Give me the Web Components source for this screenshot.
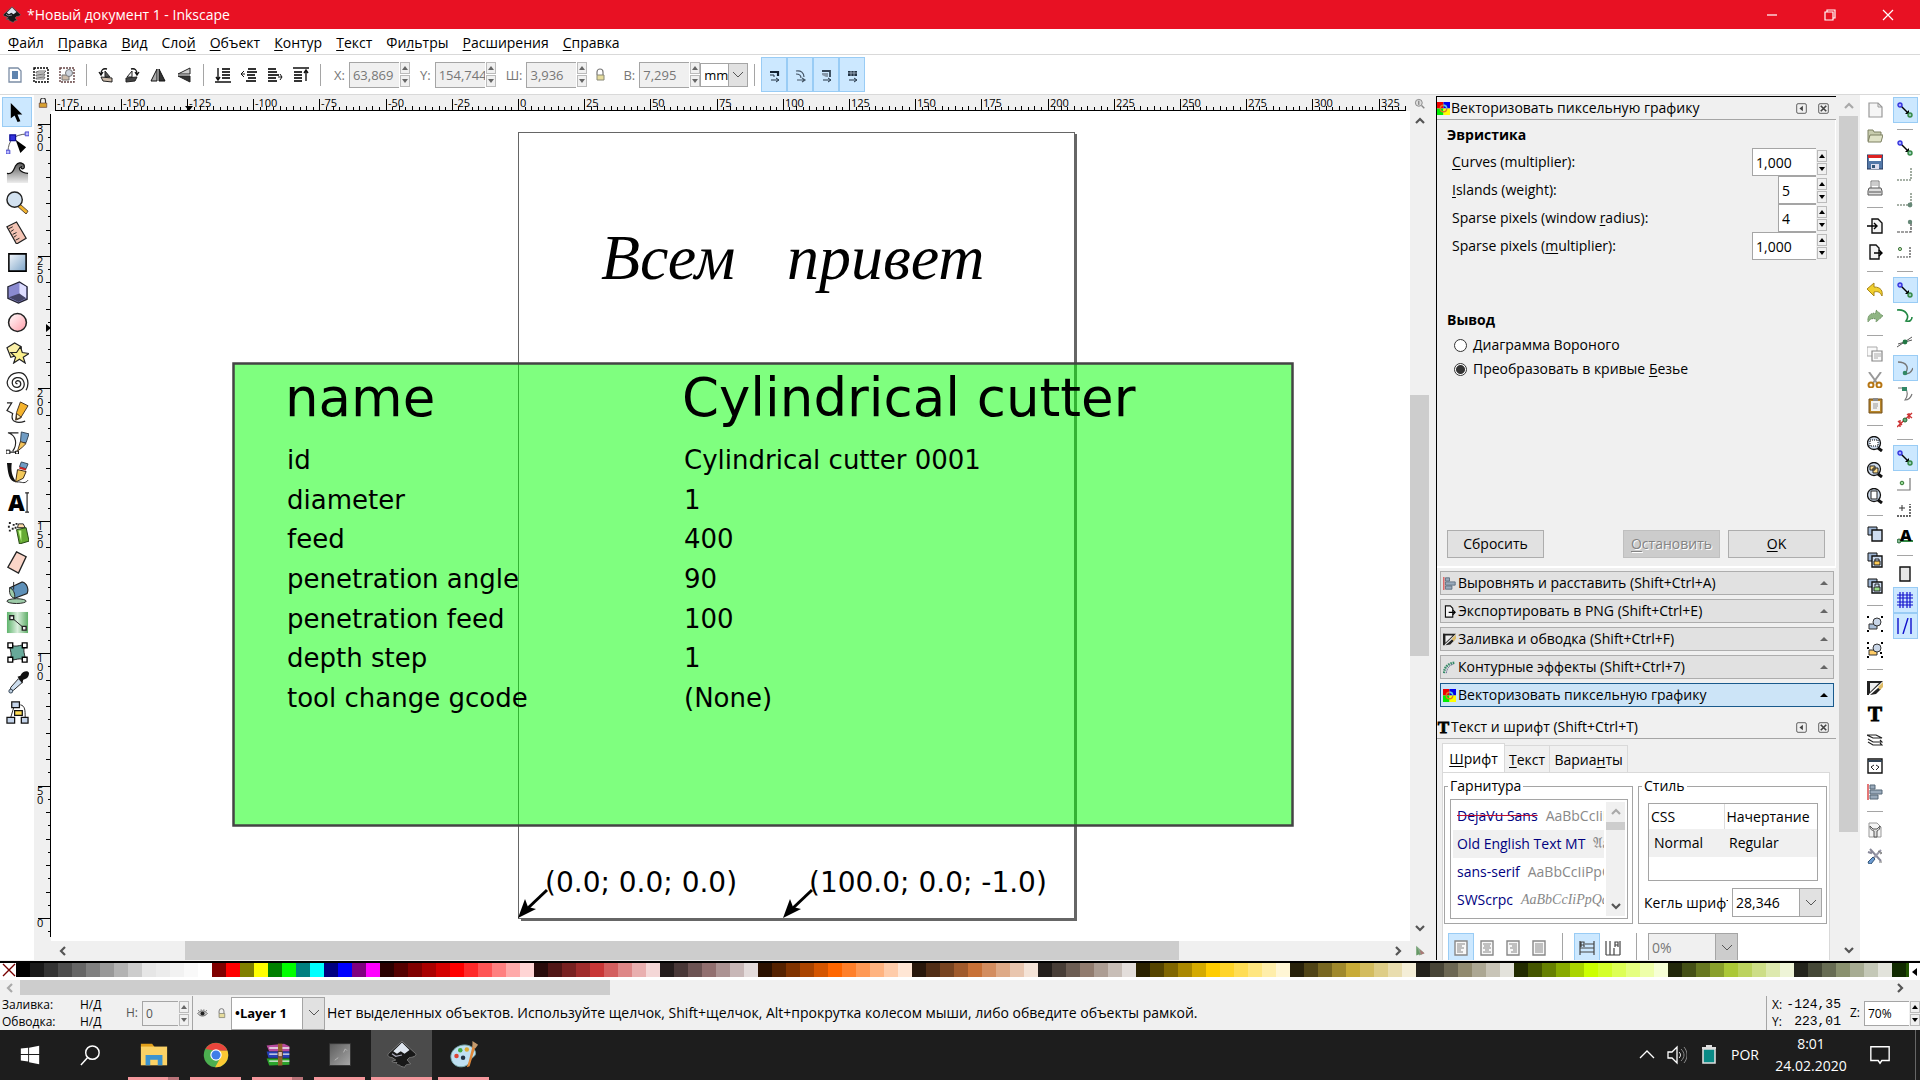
<!DOCTYPE html>
<html lang="ru">
<head>
<meta charset="utf-8">
<title>*Новый документ 1 - Inkscape</title>
<style>
    html, body { height: 100%; }
    body {
        margin: 0;
        overflow: hidden;
        background: #fff;
        color: #000;
        font: 14px/20px "Open Sans", "Noto Sans", sans-serif;
    }
</style>
</head>
<body>
<ink-window></ink-window>

<script>
// ---------- icons ----------
const chain = '<path d="M4 4l8 8" stroke="#000" stroke-width="1.4"/><path d="M12 8v4H8z"/><circle cx="3" cy="3" r="2" fill="#aaf" stroke="#33d" stroke-width="1.4"/><circle cx="13" cy="13" r="2" fill="#9cb" stroke="#384" stroke-width="1.4"/>';
const lens = '<circle cx="7" cy="7" r="6.5" fill="#cfdcec" stroke="#111" stroke-width="1.3"/><path d="M11 12l4 3" stroke="#111" stroke-width="3"/>';
const sheets = '<path d="M1 1h9v8H1z" fill="#9db4d2" stroke="#111"/><path d="M5 4h10v11H5z" fill="#cddcf0" stroke="#111" stroke-width="1.4"/>';
const pageOut = '<path d="M3 1h6l3 3v11H3z" fill="#f4f4f4" stroke="#111" stroke-width="1.4"/>';
const logo = '<path d="M12 1L23 11c1 2-3 3-5 3l-2 2c2 1 1 2 3 3-3 1-4 0-5 3-1-1-3 0-4-2-2 0-3-1-2-2-2 0-4 0-4-1l3-1-3-2c-2 0-4-1-3-3z" fill="#181818" stroke="#777" stroke-width=".8"/><path d="M12 2l6 6-4 3-3-2-3 2-3-2z" fill="#dfe6f0"/><path d="M4 11l3 2 5-1" stroke="#aab" fill="none"/>';
const raster = '<path d="M0 0h8v8H0z" fill="#e00"/><path d="M8 0h8v8H8z" fill="#00e"/><path d="M0 8h8v8H0z" fill="#0e0"/><path d="M8 8h8v8H8z" fill="#ff0"/><circle cx="8" cy="8" r="4" fill="none" stroke="#d72" stroke-width="1.6"/><path d="M8 4a4 4 0 0 1 4 4" fill="none" stroke="#4cf" stroke-width="1.6"/>';
const pageLines = l => `<path d="M2 1h12v14H2z" fill="#f8f8f8" stroke="#888" stroke-width="1.4"/><path d="${l}" stroke="#888"/>`;
const brush = '<path d="M0 1h16L1 15z" fill="#222"/><path d="M0 1h2v14H0z" fill="#222"/><path d="M3 3h9L3 12z" fill="#eee"/><path d="M3 15l8-7 3 1-5 5z" fill="#222"/><path d="M11 7l5-5v5l-3 3z" fill="#db6"/>';
const bars = '<path d="M1 0v16" stroke="#d55" stroke-width="1.6"/><path d="M3 1h5v4H3zM3 6h12v4H3zM3 11h8v4H3z" fill="#9ab" stroke="#567"/>';

const ICONS = {
    logo: [24, logo],
    // select toolbar
    doc: [16, '<path d="M2 1h9l3 3v11H2z" fill="#fff" stroke="#7b8da5" stroke-width="1.3"/><path d="M5 5h6M5 7h6M5 9h6M5 11h6" stroke="#2c5c94" stroke-width="1.3"/>'],
    selAll: [16, '<path d="M1 1h14v14H1z" fill="none" stroke="#000" stroke-width="1.4" stroke-dasharray="2 1"/><path d="M3 5l3-1h7l-2 2H3zM3 8l9-1-1 2H3zM3 11l9-1-1 2H3z" fill="#eee" stroke="#555" stroke-width=".8"/>'],
    selTouch: [16, '<path d="M1 1h14v14H1z" fill="none" stroke="#644" stroke-width="1.4" stroke-dasharray="2 1"/><path d="M3 8h7v5H3z" fill="#cba" stroke="#777"/><circle cx="10" cy="6" r="3.5" fill="#cdd4dd" stroke="#777"/>'],
    rotL: [16, '<path d="M7 10V4l5 6z" fill="#555" stroke="#222"/><path d="M3 10l11 1v4L5 14z" fill="#cba" stroke="#222"/><path d="M9 2C5 1 3 3 3 7M1 5l2 3 2-3" fill="none" stroke="#111" stroke-width="1.3"/>'],
    rotR: [16, '<path d="M8 10V4l-5 6z" fill="#eee" stroke="#222"/><path d="M13 10L2 11v4l9-1z" fill="#444" stroke="#222"/><path d="M7 2c4-1 6 1 6 5M11 5l2 3 2-3" fill="none" stroke="#111" stroke-width="1.3"/>'],
    flipH: [16, '<path d="M7 2v12H1z" fill="#aaa" stroke="#111"/><path d="M9 2v12h6z" fill="#333" stroke="#111"/>'],
    flipV: [16, '<path d="M14 1v6H2z" fill="#ccc" stroke="#222"/><path d="M14 15V9H2z" fill="#333" stroke="#222"/>'],
    toBottom: [16, '<path d="M3 1v11M1 10l2 3 2-3M0 15h16" fill="none" stroke="#111" stroke-width="1.4"/><path d="M7 2h8M7 5h8M7 8h8M7 11h8" stroke="#333" stroke-width="2"/>'],
    lower: [16, '<path d="M4 7H1M3 4L0 7l3 3" fill="none" stroke="#111"/><path d="M7 2h8M6 5h10M6 8h8M7 11h8M5 14h10" stroke="#333" stroke-width="2"/>'],
    raise: [16, '<path d="M11 10h4M13 7l2 3-2 3" fill="none" stroke="#111"/><path d="M1 2h8M1 5h9M1 8h11M1 11h8M1 14h9" stroke="#333" stroke-width="2"/>'],
    toTop: [16, '<path d="M13 14V4M11 6l2-3 2 3M0 1h16" fill="none" stroke="#111" stroke-width="1.4"/><path d="M1 5h8M1 8h8M1 11h8M1 14h8" stroke="#333" stroke-width="2"/>'],
    lock: [16, '<path d="M5 8V5a3 3 0 0 1 6 0v3" fill="none" stroke="#777" stroke-width="1.2"/><path d="M5 8h7v5H5z" fill="#e6dc9c" stroke="#887"/>'],
    lockGold: [16, '<path d="M4 8V4a4 4 0 0 1 8 0v4" fill="none" stroke="#333" stroke-width="1.8"/><path d="M2 8h12v7H2z" fill="#d8a030" stroke="#533"/>'],
    affStroke: [16, '<path d="M4 5h8v4" fill="none" stroke="#123" stroke-width="2.2"/><path d="M4 8h4v2M5 13h7M10 11l3 2-3 2" fill="none" stroke="#234"/>'],
    affCorner: [16, '<path d="M4 4c5-1 8 2 8 6M4 7c3 0 5 1 5 4M5 13h7M10 11l3 2-3 2" fill="none" stroke="#456" stroke-width="1.2"/>'],
    affGrad: [16, '<path d="M4 4h8v6" fill="none" stroke="#345" stroke-width="1.8"/><path d="M4 6h6v4H8L4 8z" fill="#89a"/><path d="M5 13h7M10 11l3 2-3 2" fill="none" stroke="#234"/>'],
    affPat: [16, '<path d="M4 4h9v5H4z" fill="#234"/><path d="M7 4v5M10 4v5M4 6h9" stroke="#bcd" stroke-width=".7"/><path d="M5 13h7M10 11l3 2-3 2" fill="none" stroke="#234"/>'],
    // toolbox
    pointer: [24, '<path d="M5 2v16l4-3 3 7 3-1-3-7h5z" fill="#000"/>'],
    node: [24, '<path d="M2 21C3 10 7 4 22 3" fill="none" stroke="#555"/><path d="M4 4h6v6H4z" fill="#33d" stroke="#119" stroke-width="1.3"/><path d="M20 1h4v4h-4zM0 20h4v4H0z" fill="#bbf" stroke="#44c"/><path d="M10 9l11 8-6 6z"/>'],
    tweak: [24, '<defs><linearGradient id="a" x2="0" y2="1"><stop offset="0" stop-color="#555"/><stop offset="1" stop-color="#eee"/></linearGradient></defs><path d="M1 23V13c6 1 7-4 9-8 3-6 10-3 9 2-1 2-4 1-3-1-3 1-2 6 7 7v10z" fill="url(#a)"/><path d="M1 13c6 1 7-4 9-8 3-5 10-3 9 2-1 2-4 1-3-1-4 1-2 6 7 7" fill="none" stroke="#111" stroke-width="1.3"/>'],
    zoom: [24, '<path d="M15 14l8 7-2 3-9-8z" fill="#f2b32c" stroke="#543"/><circle cx="9" cy="9" r="8" fill="#d3e2f0" stroke="#222" stroke-width="1.5"/>'],
    measure: [24, '<path d="M1 6l10-5 10 17-10 6z" fill="#f4c4b4" stroke="#222" stroke-width="1.3"/><path d="M3 8l4-2M5 11l3-2M7 14l4-2M8 17l3-2M10 20l4-2" stroke="#222"/>'],
    rect: [24, '<defs><linearGradient id="b" x2="1" y2="1"><stop offset="0" stop-color="#f4f8fc"/><stop offset="1" stop-color="#7ba3c7"/></linearGradient></defs><path d="M3 3h18v18H3z" fill="url(#b)" stroke="#000" stroke-width="1.6"/>'],
    box: [24, '<path d="M2 6L14 1l8 5v13l-9 4L2 18z" fill="#8a8ad0" stroke="#223" stroke-width="1.4"/><path d="M14 2l7 4v12l-7-4z" fill="#ddf"/><path d="M3 17l11-4 7 5-8 4z" fill="#446"/>'],
    ellipse: [24, '<defs><linearGradient id="c" x2="1" y2="1"><stop offset="0" stop-color="#fff"/><stop offset="1" stop-color="#ff9ca8"/></linearGradient></defs><circle cx="12" cy="12" r="9.3" fill="url(#c)" stroke="#222" stroke-width="1.6"/>'],
    star: [24, '<path d="M1 7l8-5 7 4-1 8-10 3z" fill="#fbf0a8" stroke="#222" stroke-width="1.2"/><path d="M15 6l2 6 7 1-6 4 2 6-6-4-6 4 2-6-5-5 6 0z" fill="#fbf08c" stroke="#222" stroke-width="1.2"/>'],
    spiral: [24, '<path d="M12 13c-2 1-3-2 0-3 4 0 5 6 0 7-6 1-8-8-1-10 8-1 11 9 4 13-8 4-16-4-13-11C5 1 17-1 21 6c3 5 2 10 0 14" fill="none" stroke="#222" stroke-width="1.3"/>'],
    pencil: [24, '<path d="M1 2h5L1 10l6 3c-3 9 5 11 13 8" fill="none" stroke="#222" stroke-width="1.2"/><path d="M15 1l8 4-8 13-5 2 1-8z" fill="#f5b32c" stroke="#432"/><path d="M11 13l5 4-5 2z" fill="#fff4c8" stroke="#432"/>'],
    pen: [24, '<path d="M2 2h11M3 2c8 3 9 12 4 19M4 22h8" fill="none" stroke="#222" stroke-width="1.2"/><path d="M0 20h4v4H0zM10 21h3v3h-3z" fill="#fff" stroke="#000"/><path d="M16 1l8 2-3 9h-6z" fill="#6f9cc4" stroke="#345"/><path d="M15 11l6 2-4 4-5 4z" fill="#f2c35a" stroke="#432"/>'],
    calli: [24, '<path d="M1 2h5c-1 8 0 14 5 20C3 22 2 12 1 2z" fill="#111"/><path d="M16 1l7 2-2 5-7-2z" fill="#6f9cc4" stroke="#345"/><path d="M14 7l7 2" stroke="#c22" stroke-width="2"/><path d="M12 9l9 2-3 7-8 4z" fill="#f2c85a" stroke="#321"/><path d="M11 22c5-1 8 3 12-2" fill="none" stroke="#222"/>'],
    text: [24, '<path d="M22 2v20M20 2h4M20 22h4" stroke="#222" stroke-width="1.2"/><text x="2" y="21" font-family="Open Sans, sans-serif" font-size="24" font-weight="800">A</text>'],
    spray: [24, '<path d="M3 2h2M7 4h2M2 6h2M6 8h2M10 3h2M3 10h2M9 7h2" stroke="#222" stroke-width="2"/><path d="M12 7l1-4h5l2 4z" fill="#fda" stroke="#222"/><path d="M11 9l10-2 3 14-10 3z" fill="#6a3" stroke="#241"/><path d="M13 10h3v12z" fill="#cf9"/>'],
    eraser: [24, '<path d="M11 1l10 5-8 17-11-6z" fill="#fbd5c8" stroke="#222" stroke-width="1.4"/>'],
    bucket: [24, '<ellipse cx="11" cy="21" rx="10" ry="2.5" fill="#9dcba8" stroke="#222"/><path d="M4 7L17 1c5 1 7 8 5 12L9 18z" fill="#5e90b8" stroke="#222" stroke-width="1.2"/><path d="M4 7c3 1 6 6 5 11-5-1-6-7-5-11z" fill="#9dcba8" stroke="#222"/><path d="M8 1v8" stroke="#222"/>'],
    gradient: [24, '<defs><linearGradient id="d" x2="1"><stop offset="0" stop-color="#5fb46c"/><stop offset=".5" stop-color="#d9eedc"/><stop offset="1" stop-color="#5fae68"/></linearGradient></defs><path d="M1 1h22v22H1z" fill="url(#d)"/><path d="M6 7l13 11" stroke="#222"/><path d="M4 5h4v4H4zM17 16h4v4h-4z" fill="#eee" stroke="#222" stroke-width="1.4"/>'],
    mesh: [24, '<path d="M4 4c7 3 10 0 16 0-3 7 0 9 0 16-7-3-9 0-16 0 3-7 0-9 0-16z" fill="#67a99a" stroke="#222"/><path d="M2 2h5v5H2zM17 2h5v5h-5zM2 17h5v5H2zM17 17h5v5h-5z" fill="#fff" stroke="#000" stroke-width="1.4"/>'],
    dropper: [24, '<path d="M13 8l4 4-9 8-4 2 1-5z" fill="#cde" stroke="#222"/><path d="M12 6l3-1c2-5 8-6 9-3 0 4-2 6-6 7l-1 4z" fill="#111"/><circle cx="5" cy="21" r="2" fill="#bcd" stroke="#345"/>'],
    connector: [24, '<path d="M5 17L8 7M15 4c5 1 5 6 5 13" fill="none" stroke="#222"/><path d="M6 1h8v6H6zM1 17h8v6H1zM16 17h7v6h-7z" fill="#c4d4ea" stroke="#111" stroke-width="1.3"/><path d="M9 10h8v5H9z" fill="#fd5" stroke="#111" stroke-width="1.3"/>'],
    // commands
    new: [16, '<path d="M2 1h9l4 4v10H2z" fill="#f6f6f6" stroke="#999" stroke-width="1.2"/><path d="M11 1v4h4" fill="none" stroke="#999"/>'],
    open: [16, '<path d="M1 13V2h5l1 2h7v3" fill="#c8ccae" stroke="#7d8062"/><path d="M3 7h13l-2 7H1z" fill="#dfe2c6" stroke="#7d8062"/>'],
    save: [16, '<path d="M0 1h16v14H0z" fill="#5378a8" stroke="#235"/><path d="M2 1h12v6H2z" fill="#fff"/><path d="M1 1h14v3H1z" fill="#d22"/><path d="M4 10h8v5H4z" fill="#dde"/><path d="M5 11h3v3H5z" fill="#357"/>'],
    print: [16, '<path d="M4 1h8v8H4z" fill="#fff" stroke="#777"/><path d="M5 3h6M5 5h6" stroke="#999"/><path d="M2 8h12l1 3v4H1v-4z" fill="#ddd" stroke="#555"/><path d="M2 12h12" stroke="#555"/>'],
    import: [16, '<path d="M5 1h6l4 4v10H5z" fill="#f4f4f4" stroke="#111" stroke-width="1.4"/><path d="M0 8h9M7 5l3 3-3 3" fill="none" stroke="#000" stroke-width="1.4"/>'],
    export: [16, pageOut + '<path d="M7 9h8M12 6l3 3-3 3" fill="none" stroke="#000" stroke-width="1.4"/>'],
    undo: [16, '<path d="M0 7l7-6v4c7 0 9 4 8 9-2-4-4-5-8-4v4z" fill="#f0cf2e" stroke="#a8861a"/>'],
    redo: [16, '<path d="M16 8L9 2v3C3 5 0 8 1 14c2-3 4-4 8-3v3z" fill="#8fb583" stroke="#5b8052" stroke-dasharray="1 1"/>'],
    copy: [16, '<path d="M0 1h10v9H0z" fill="#fafafa" stroke="#aaa"/><path d="M5 5h10v10H5z" fill="#fafafa" stroke="#888" stroke-width="1.2"/><path d="M7 8h7M7 10h7M7 12h4" stroke="#aaa"/>'],
    cut: [16, '<path d="M2 0l8 11M14 0L6 11" stroke="#999" stroke-width="2"/><circle cx="4" cy="13" r="2.5" fill="none" stroke="#b67614" stroke-width="2"/><circle cx="12" cy="13" r="2.5" fill="none" stroke="#b67614" stroke-width="2"/>'],
    paste: [16, '<path d="M2 1h13v14H2z" fill="#b8862a" stroke="#74501a"/><path d="M4 3h9v10H4z" fill="#f4f4f0"/><path d="M6 0h5v3H6z" fill="#888"/><path d="M6 6h5M6 8h5M6 10h4" stroke="#999"/>'],
    zoomSel: [16, lens + '<path d="M3 4h8v6H3z" fill="#fff" stroke="#000" stroke-dasharray="1 1"/>'],
    zoomDraw: [16, lens + '<path d="M3 4h5v4H3zM6 6h5v5H6z" fill="#fd8" stroke="#222"/>'],
    zoomPage: [16, lens + '<path d="M4 3h6v8H4z" fill="#fff" stroke="#222"/>'],
    dup: [16, sheets],
    clone: [16, sheets + '<path d="M7 9h6v4H7z" fill="#fc5" stroke="#222"/><path d="M8 9V7h4v2" fill="none" stroke="#222"/>'],
    unlink: [16, sheets + '<path d="M7 9h6v4H7z" fill="#9d8" stroke="#222"/><path d="M8 8V6h4v3" fill="none" stroke="#222"/>'],
    group: [16, '<path d="M0 1h2M14 1h2M0 15h2M14 15h2" stroke="#000" stroke-width="2"/><path d="M2 8h8v5H2z" fill="#a9bdd6" stroke="#333"/><circle cx="10" cy="6" r="4" fill="#c9d6e8" stroke="#333"/>'],
    ungroup: [16, '<path d="M0 1h2M14 1h2M0 15h2M14 15h2M0 6h2M13 11h2" stroke="#000" stroke-width="2"/><path d="M2 8h8v5H2z" fill="#fc6" stroke="#333"/><circle cx="10" cy="6" r="4" fill="#c9d6e8" stroke="#333"/>'],
    fill: [16, brush],
    bigT: [16, '<text x="8" y="15" text-anchor="middle" font-family="Liberation Serif, serif" font-size="21" font-weight="700" stroke="#000">T</text>'],
    layers: [16, '<path d="M0 3h9l6 3H6zM1 7l5 3h9l-2-2M1 10l5 3h9l-2-2" fill="#fff" stroke="#222" stroke-width="1.2"/>'],
    xml: [16, '<path d="M1 1h14v14H1z" fill="#fff" stroke="#111" stroke-width="1.4"/><path d="M1 3h14" stroke="#345" stroke-width="2"/><path d="M7 7L4 9l3 3M9 7l3 2-3 3" fill="none" stroke="#222"/>'],
    align: [16, bars],
    docProps: [16, '<path d="M2 1h8l4 4v10H2z" fill="#f4f4f4" stroke="#999"/><path d="M3 4c0 4 2 4 4 5v6h3V9c2-1 3-2 3-5l-3 3H6z" fill="#ddd" stroke="#555"/>'],
    prefs: [16, '<path d="M3 1l11 12M1 4l3 1 1-3" fill="none" stroke="#889" stroke-width="2"/><path d="M14 2L3 14" stroke="#99a" stroke-width="2"/><path d="M6 9l-5 5 1 2h2l4-5z" fill="#6c9bd2" stroke="#357"/><path d="M11 3l4 2-2 1M15 14h-3" stroke="#777" fill="none"/>'],
    // snapping
    snap: [16, chain],
    snapBox: [16, '<path d="M0 14h14V1" fill="none" stroke="#8a988a" stroke-width="1.6" stroke-dasharray="2 1"/>'],
    snapCorner: [16, '<path d="M0 13h14V1" fill="none" stroke="#8a988a" stroke-width="1.6" stroke-dasharray="2 1"/><circle cx="13" cy="13" r="2.4" fill="#687"/>'],
    snapMid: [16, '<path d="M0 14h14V3" fill="none" stroke="#444" stroke-width="1.2" stroke-dasharray="3 1"/><circle cx="13" cy="4" r="2.2" fill="#687"/>'],
    snapCenter: [16, '<path d="M0 13h13V2" fill="none" stroke="#444" stroke-width="1.2" stroke-dasharray="2 1"/><circle cx="3" cy="5" r="1.6" fill="#bda" stroke="#474"/>'],
    snapPath: [16, '<path d="M0 2c9-1 13 6 9 11 4 1 6-1 6-4" fill="none" stroke="#284" stroke-width="1.6"/>'],
    snapX: [16, '<path d="M0 13L15 3M1 10l14-4" stroke="#555"/><circle cx="8" cy="8" r="2.4" fill="#274"/>'],
    snapCusp: [16, '<path d="M1 2c8 0 12 5 7 12 5 0 7-3 8-6" fill="none" stroke="#777" stroke-width="1.4"/><circle cx="8" cy="13" r="2.3" fill="#386"/>'],
    snapSmooth: [16, '<path d="M1 2h7c3 3 3 8 0 12 4 0 6-3 7-6" fill="none" stroke="#777" stroke-width="1.2"/><path d="M5 1h5v4H5z" fill="#386"/>'],
    snapLine: [16, '<path d="M0 15L15 1M1 9l4 4M3 8v7M10 2l5 4M12 1v6" stroke="#c33" stroke-width="1.4"/><circle cx="8" cy="8" r="2" fill="#6a7" stroke="#263"/>'],
    snapObj: [16, '<path d="M0 14h13V2" fill="none" stroke="#777" stroke-width="1.2"/><circle cx="5" cy="7" r="1.8" fill="#9d9" stroke="#373"/>'],
    snapRot: [16, '<path d="M0 14h13V2" fill="none" stroke="#333" stroke-width="1.4" stroke-dasharray="2 1"/><path d="M5 3v6M2 6h6" stroke="#333"/>'],
    snapText: [16, '<path d="M3 13h13" stroke="#384" stroke-width="2"/><circle cx="2" cy="13" r="2" fill="#8b9" stroke="#263"/><text x="3" y="13" font-family="Open Sans, sans-serif" font-size="16" font-weight="800">A</text>'],
    snapPage: [16, '<path d="M3 1h10v14H3z" fill="#e8e8e8" stroke="#111" stroke-width="1.4"/>'],
    snapGrid: [16, '<path d="M3 0v16M6 0v16M10 0v16M13 0v16M0 3h16M0 6h16M0 10h16M0 13h16" stroke="#11c" stroke-width="1.2"/>'],
    snapGuide: [16, '<path d="M1 0v16M6 16l5-16M14 0v16" stroke="#11c" stroke-width="1.4"/>'],
    // docks
    raster: [16, raster],
    effects: [16, '<path d="M1 15C2 7 6 3 15 2" fill="none" stroke="#386" stroke-width="3" stroke-dasharray="2 1"/><path d="M4 15C5 9 8 5 13 4" fill="none" stroke="#558" stroke-dasharray="2 1"/>'],
    iconify: [16, '<rect x="1" y="1" width="14" height="14" rx="2" fill="none" stroke="#444" stroke-width="1.2"/><path d="M10 4v8L5 8z" fill="#444"/>'],
    close: [16, '<rect x="1" y="1" width="14" height="14" rx="2" fill="none" stroke="#444" stroke-width="1.2"/><path d="M4 4l8 8M12 4l-8 8" stroke="#444" stroke-width="2.4"/>'],
    left: [16, pageLines('M4 4h8M4 6h5M4 8h7M4 10h4M4 12h6')],
    center: [16, pageLines('M4 4h8M5 6h6M4 8h8M6 10h4M4 12h8')],
    right: [16, pageLines('M4 4h8M7 6h5M5 8h7M8 10h4M6 12h6')],
    justify: [16, pageLines('M4 4h8M4 6h8M4 8h8M4 10h8M4 12h8')],
    horiz: [16, '<path d="M1 1v14M15 1v14M6 4h9M1 8h14M1 12h14M2 7V2h3v5M2 5h3" fill="none" stroke="#444" stroke-width="1.2"/>'],
    vert: [16, '<path d="M1 1v14M5 1v14M9 8v7M1 15h14M15 1v14M10 7V2h3v5M10 5h3" fill="none" stroke="#444" stroke-width="1.2"/>'],
    eye: [16, '<path d="M1 8c4-5 10-5 14 0-4 5-10 5-14 0z" fill="#ccc" stroke="#444"/><circle cx="8" cy="8" r="3" fill="#222"/><path d="M3 5L2 3M6 4V2M10 4V2M13 5l1-2" stroke="#444"/>'],
    magnify: [16, '<circle cx="7" cy="7" r="5" fill="#ddd" stroke="#888" stroke-width="1.4"/><path d="M11 11l4 4" stroke="#888" stroke-width="2"/><path d="M7 4v6" stroke="#666" stroke-width="1.4"/>'],
    cms: [16, '<path d="M3 1l11 10-7 3z" fill="#8a8"/><path d="M3 1v13l5-2z" fill="#696"/><path d="M8 6l6 5-5 2z" fill="#a77"/>'],
    // taskbar
    win: [24, '<path d="M2 5l8-1v7H2zM11 4l11-2v9H11zM2 12h8v7l-8-1zM11 12h11v10l-11-2z" fill="#fff"/>'],
    search: [24, '<circle cx="14" cy="9" r="7" fill="none" stroke="#fff" stroke-width="1.5"/><path d="M9 14l-7 8" stroke="#fff" stroke-width="1.5"/>'],
    folder: [32, '<path d="M2 4h12l3 4H2z" fill="#e2a01a"/><path d="M2 7h28v20H2z" fill="#fbd265"/><path d="M7 27V16h18v11h-5v-6h-8v6z" fill="#3b93d0"/>'],
    chrome: [32, '<circle cx="16" cy="16" r="14" fill="#4caf50"/><path d="M4 9a14 14 0 0 1 25 2H16z" fill="#e8453c"/><path d="M29 11a14 14 0 0 1-14 19l6-11-2-8z" fill="#fcc934"/><circle cx="16" cy="16" r="6.5" fill="#fff"/><circle cx="16" cy="16" r="5.2" fill="#3f7de8"/>'],
    rar: [32, '<path d="M3 5l20-2 6 3v6H6z" fill="#b64a9c"/><path d="M3 12h26v7H5z" fill="#2540b8"/><path d="M3 20h26v7l-23 1z" fill="#2ba32b"/><path d="M6 8h23M6 15h23M6 23h23" stroke="#eee" stroke-width="1.5"/><path d="M16 3h5v25h-5z" fill="#94602a"/><path d="M16 12h5v6h-5z" fill="#dba" stroke="#532"/>'],
    gray: [32, '<defs><linearGradient id="e" x2="1" y2="1"><stop offset="0" stop-color="#5c5c5c"/><stop offset="1" stop-color="#a8a8a8"/></linearGradient></defs><path d="M4 3h24v25H4z" fill="url(#e)" stroke="#333"/><path d="M20 13l2-4 2 2M10 22l4-3" fill="none" stroke="#bbb"/>'],
    paint: [32, '<path d="M2 17C3 7 18 1 26 9c6 7-1 9-3 12-1 6-8 9-14 7-5-2-7-6-7-11z" fill="#bfe0f2" stroke="#7aa"/><circle cx="8" cy="17" r="2.4" fill="#d43"/><circle cx="12" cy="11" r="2.4" fill="#4a4"/><circle cx="19" cy="10" r="2.4" fill="#da3"/><circle cx="15" cy="19" r="2.4" fill="#234"/><path d="M29 4l-7 24-3 1 2-6 5-20z" fill="#e0883a"/><path d="M25 1l6 4-3 4-3-2z" fill="#c49a6c"/>'],
    tray: [16, '<path d="M1 11l7-7 7 7" fill="none" stroke="#fff" stroke-width="1.3"/>'],
    sound: [20, '<path d="M1 7h4l5-5v16l-5-5H1z" fill="none" stroke="#fff" stroke-width="1.3"/><path d="M12 7c2 2 2 4 0 6" fill="none" stroke="#fff"/><path d="M14 4c4 4 4 8 0 12M17 2c4 5 4 11 0 16" fill="none" stroke="#888"/>'],
    bin: [20, '<path d="M4 4h12v14H4z" fill="#0a8a86" stroke="#ddd" stroke-width="1.6"/><path d="M3 3h14M7 1h6" stroke="#ddd" stroke-width="2"/>'],
    note: [24, '<path d="M2 3h20v15h-8l-2 3-2-3H2z" fill="none" stroke="#fff" stroke-width="1.5"/>'],
    min: [16, '<path d="M3 8h10" stroke="#fff" stroke-width="1.2"/>'],
    restore: [16, '<path d="M3 5h8v8H3zM5 5V3h8v8h-2" fill="none" stroke="#fff" stroke-width="1.2"/>'],
    exit: [16, '<path d="M3 3l10 10M13 3L3 13" stroke="#fff" stroke-width="1.2"/>'],
    up: [16, '<path d="M4 10l4-4 4 4" fill="none" stroke="#555" stroke-width="2.2"/>'],
    down: [16, '<path d="M4 6l4 4 4-4" fill="none" stroke="#555" stroke-width="2.2"/>'],
    prev: [16, '<path d="M10 4L6 8l4 4" fill="none" stroke="#555" stroke-width="2.2"/>'],
    next: [16, '<path d="M6 4l4 4-4 4" fill="none" stroke="#555" stroke-width="2.2"/>'],
};

const icon = (name, size = 16) => `<ink-icon name="${name}" size="${size}"></ink-icon>`;
// "_Файл" -> underlined access key
const mnemonic = s => s.replace(/_(.)/, '<u>$1</u>');

const BASE = `
    *, *::before { box-sizing: border-box; }
    button, input, select { font: inherit; color: inherit; margin: 0; padding: 0; border: 0; border-radius: 0; background: none; min-width: 0; }
    u { text-underline-offset: 2px; }
`;

class InkElement extends HTMLElement {
    constructor() {
        super();
        this.attachShadow({ mode: 'open' });
    }
    connectedCallback() {
        this.shadowRoot.innerHTML = `<style>${BASE}${this.styles()}</style>${this.markup()}`;
    }
    styles() { return ''; }
    markup() { return ''; }
}

class InkIcon extends InkElement {
    styles() { return ':host { display: block; flex: none; } svg { display: block; }'; }
    markup() {
        const [box, body] = ICONS[this.getAttribute('name')];
        const size = this.getAttribute('size');
        return `<svg width="${size}" height="${size}" viewBox="0 0 ${box} ${box}" aria-hidden="true">${body}</svg>`;
    }
}
customElements.define('ink-icon', InkIcon);

// number entry with two stacked arrows
class InkSpin extends InkElement {
    styles() {
        return `
            :host { display: flex; align-items: center; gap: 4px; }
            label { flex: 1; white-space: nowrap; }
            input { width: var(--field, 50px); height: var(--h, 26px); padding: 0 0 0 3px; border: 1px solid #a5a5a5; border-right: 0; background: #fff; }
            .box { display: flex; gap: 1px; }
            .arrows { display: flex; flex-direction: column; gap: 1px; justify-content: center; }
            button { display: block; width: 10px; height: 12px; border: 1px solid #bbb; background: #f0f0f0; }
            svg { display: block; width: 8px; height: 10px; }
            :host([off]) { color: #777; fill: #666; }
            :host([off]) input { background: #f0f0f0; }
        `;
    }
    markup() {
        const off = this.hasAttribute('off') ? 'disabled' : '';
        return `
            <label for="f">${mnemonic(this.getAttribute('label'))}</label>
            <span class="box">
                <input id="f" value="${this.getAttribute('value')}" ${off}>
                <span class="arrows">
                    <button aria-label="+" ${off}><svg viewBox="0 0 8 10"><path d="M1 7l3-4 3 4z"/></svg></button>
                    <button aria-label="-" ${off}><svg viewBox="0 0 8 10"><path d="M1 3l3 4 3-4z"/></svg></button>
                </span>
            </span>`;
    }
}
customElements.define('ink-spin', InkSpin);

class InkCombo extends InkElement {
    styles() {
        return `
            :host { display: flex; align-items: center; gap: 4px; }
            label { width: var(--label, auto); overflow: hidden; white-space: nowrap; }
            .box { display: grid; width: var(--field, 90px); height: var(--h, 29px); border: 1px solid #a5a5a5; background: #fff; }
            select, .arrow { grid-area: 1 / 1; }
            select { appearance: none; padding: 0 0 0 3px; outline: 0; opacity: 1; }
            .arrow { justify-self: end; display: grid; place-items: center; width: var(--arrow, 22px); border-left: 1px solid #a5a5a5; background: #e1e1e1; pointer-events: none; }
            :host([off]) .box { background: #f0f0f0; color: #777; }
            :host([off]) .arrow { background: #ccc; }
        `;
    }
    markup() {
        const off = this.hasAttribute('off') ? 'disabled' : '';
        const label = this.getAttribute('label');
        return `
            ${label ? `<label for="c">${label}</label>` : ''}
            <span class="box">
                <select id="c" aria-label="${this.getAttribute('value')}" ${off}><option>${this.getAttribute('value')}</option></select>
                <span class="arrow"><svg width="12" height="8" viewBox="0 0 12 8"><path d="M1 1l5 5 5-5" fill="none" stroke="#555"/></svg></span>
            </span>`;
    }
}
customElements.define('ink-combo', InkCombo);

// scroll bar: before / thumb / after are flex weights
class InkScroll extends InkElement {
    styles() {
        const v = this.hasAttribute('vertical');
        return `
            :host { display: flex; flex-direction: ${v ? 'column' : 'row'}; align-items: stretch; background: #f0f0f0; }
            ink-icon { align-self: center; padding: ${v ? '2px 0' : '0 2px'}; }
            .dim { opacity: .45; }
            .thumb { background: #cdcdcd; }
        `;
    }
    markup() {
        const v = this.hasAttribute('vertical');
        const [before, thumb, after] = this.getAttribute('parts').split(' ');
        return `
            <ink-icon name="${v ? 'up' : 'prev'}" size="16" class="${before === '0' ? 'dim' : ''}"></ink-icon>
            <span style="flex: ${before} 0 0"></span>
            <span class="thumb" style="flex: ${thumb} 0 0"></span>
            <span style="flex: ${after} 0 0"></span>
            <ink-icon name="${v ? 'down' : 'next'}" size="16"></ink-icon>`;
    }
}
customElements.define('ink-scroll', InkScroll);

class InkTitlebar extends InkElement {
    styles() {
        return `
            :host { display: flex; align-items: center; height: 29px; padding: 0 24px 0 3px; gap: 6px; background: #e81123; color: #fff; }
            span { flex: 1; }
            nav { display: flex; gap: 42px; }
            button { display: block; }
        `;
    }
    markup() {
        return `${icon('logo', 18)}<span>*Новый документ 1 - Inkscape</span>
            <nav><button aria-label="Свернуть">${icon('min')}</button><button aria-label="Развернуть">${icon('restore')}</button><button aria-label="Закрыть">${icon('exit')}</button></nav>`;
    }
}
customElements.define('ink-titlebar', InkTitlebar);

class InkMenubar extends InkElement {
    styles() {
        return `
            :host { display: flex; gap: 14px; height: 26px; padding: 4px 8px 0; border-bottom: 1px solid #d9d9d9; background: #fff; }
            button { white-space: nowrap; line-height: 20px; height: 20px; }
        `;
    }
    markup() {
        return ['_Файл', '_Правка', '_Вид', 'Сло_й', '_Объект', '_Контур', '_Текст', 'Фи_льтры', '_Расширения', '_Справка']
            .map(m => `<button>${mnemonic(m)}</button>`).join('');
    }
}
customElements.define('ink-menubar', InkMenubar);

class InkOptions extends InkElement {
    styles() {
        return `
            :host { display: flex; align-items: center; height: 40px; padding-left: 2px; border-bottom: 1px solid #d9d9d9; background: #fff; }
            button { display: grid; place-items: center; width: 26px; height: 34px; }
            i { width: 1px; height: 22px; margin: 0 6px; background: #a5a5a5; }
            ink-spin { --field: 50px; margin-left: 10px; font-size: 13px; }
            ink-spin:first-of-type { margin-left: 7px; }
            ink-combo { --field: 48px; --h: 24px; --arrow: 19px; font-size: 13px; }
            .on { display: flex; }
            .on button { height: 35px; border: 1px solid #99ccf5; background: #cce8ff; }
        `;
    }
    markup() {
        const group = names => names.map(n => `<button aria-label="${n}">${icon(n)}</button>`).join('');
        return `${group(['doc', 'selAll', 'selTouch'])}<i></i>
            ${group(['rotL', 'rotR', 'flipH', 'flipV'])}<i></i>
            ${group(['toBottom', 'lower', 'raise', 'toTop'])}<i></i>
            <ink-spin label="X:" value="63,869" off></ink-spin>
            <ink-spin label="Y:" value="154,744" off></ink-spin>
            <ink-spin label="Ш:" value="3,936" off></ink-spin>
            ${group(['lock'])}
            <ink-spin label="В:" value="7,295" off></ink-spin>
            <ink-combo value="mm"></ink-combo><i></i>
            <span class="on">${group(['affStroke', 'affCorner', 'affGrad', 'affPat'])}</span>`;
    }
}
customElements.define('ink-options', InkOptions);

class InkToolbox extends InkElement {
    styles() {
        return `
            :host { display: flex; flex-direction: column; width: 34px; flex: none; padding: 2px 2px 0; background: #fff; }
            button { display: grid; place-items: center; width: 30px; height: 30px; border: 1px solid transparent; }
            button:first-of-type { border-color: #99ccf5; background: #cce8ff; }
        `;
    }
    markup() {
        return ['pointer', 'node', 'tweak', 'zoom', 'measure', 'rect', 'box', 'ellipse', 'star', 'spiral', 'pencil', 'pen', 'calli',
            'text', 'spray', 'eraser', 'bucket', 'gradient', 'mesh', 'dropper', 'connector']
            .map(n => `<button aria-label="${n}">${icon(n, 23)}</button>`).join('');
    }
}
customElements.define('ink-toolbox', InkToolbox);

// vertical icon strip; "-" is a separator, a trailing "*" marks a pressed button
class InkStrip extends InkElement {
    styles() {
        return `
            :host { display: flex; flex-direction: column; align-items: center; width: 30px; flex: none; padding-top: 2px; background: #fff; }
            button { display: grid; place-items: center; width: 25px; height: 26px; border: 1px solid transparent; flex: none; }
            .on { border-color: #99ccf5; background: #cce8ff; }
            i { width: 16px; height: 1px; margin: 6px 0 5px; background: #a5a5a5; flex: none; }
        `;
    }
    markup() {
        return this.getAttribute('items').split(' ').map(n => n === '-' ? '<i></i>'
            : `<button class="${n.endsWith('*') ? 'on' : ''}" aria-label="${n}">${icon(n.replace('*', ''))}</button>`).join('');
    }
}
customElements.define('ink-strip', InkStrip);

const PX_PER_MM = 2.648;

class InkRuler extends InkElement {
    styles() {
        return `
            :host { display: block; overflow: hidden; background: #f0f0f0; }
            svg { display: block; width: 100%; height: 100%; }
            text { font-size: 11px; }
        `;
    }
    markup() {
        const vertical = this.hasAttribute('vertical');
        const zero = Number(this.getAttribute('zero'));
        let ticks = '', labels = '';
        if (vertical) {
            for (let mm = -5; mm <= 300; mm += 5) {
                const y = Math.round(zero - mm * PX_PER_MM);
                const len = mm % 50 === 0 ? 13 : mm % 10 === 0 ? 5 : 3;
                ticks += `M17 ${y}.5h-${len}`;
                if (mm % 50 === 0) {
                    [...String(mm)].forEach((d, i) => { labels += `<text x="3" y="${y + 9 + i * 9}">${d}</text>`; });
                }
            }
            return `<svg><path d="${ticks}M16.5 3V826" stroke="#000" fill="none"/><path d="M17 ${this.getAttribute('mark')}l-5-4v8z"/>${labels}</svg>`;
        }
        for (let i = -70; i <= 134; i++) {
            const x = Math.round(zero + i * 2.5 * PX_PER_MM);
            ticks += `M${x}.5 16v-${i % 10 === 0 ? 12 : i % 2 ? 4 : 5}`;
            if (i % 10 === 0) labels += `<text x="${x + 2}" y="12">${i * 2.5}</text>`;
        }
        return `<svg><path d="${ticks}M4 15.5H1355" stroke="#000" fill="none"/><path d="M${this.getAttribute('mark')} 16l-4-5h8z"/>${labels}</svg>`;
    }
}
customElements.define('ink-ruler', InkRuler);

class InkDrawing extends InkElement {
    styles() {
        return `
            :host { display: block; overflow: hidden; background: #fff; }
            svg { display: block; width: 100%; height: 100%; }
            text { font-family: "DejaVu Sans", sans-serif; font-size: 26px; }
            .head { font-size: 53px; }
            .script { font-family: "Liberation Serif", serif; font-style: italic; font-size: 64px; }
            .point { font-size: 28px; }
        `;
    }
    markup() {
        const rows = [['id', 'Cylindrical cutter 0001', 358], ['diameter', '1', 398], ['feed', '400', 437], ['penetration angle', '90', 477],
            ['penetration feed', '100', 517], ['depth step', '1', 556], ['tool change gcode', '(None)', 596]];
        const arrow = x => `<path d="M${x + 29} 779L${x + 9} 798" stroke="#000" stroke-width="3"/><path d="M${x} 807l7-19 3 8 8 2z"/>`;
        return `<svg>
            <path d="M1023 23h3v787H470v-3h553z" fill="#666"/>
            <rect x="467.5" y="21.5" width="556" height="786" fill="#fff" stroke="#666"/>
            <text class="script" x="550" y="168">Всем</text>
            <text class="script" x="736" y="168">привет</text>
            <rect x="182.5" y="252.5" width="1059" height="462" fill="#00ff00" fill-opacity=".5" stroke="#444" stroke-width="2.5"/>
            <text class="head" x="234" y="305">name</text>
            <text class="head" x="631" y="305">Cylindrical cutter</text>
            ${rows.map(([k, v, y]) => `<text x="236" y="${y}">${k}</text><text x="633" y="${y}">${v}</text>`).join('')}
            ${arrow(467)}${arrow(732)}
            <text class="point" x="494" y="781">(0.0; 0.0; 0.0)</text>
            <text class="point" x="758" y="781">(100.0; 0.0; -1.0)</text>
        </svg>`;
    }
}
customElements.define('ink-drawing', InkDrawing);

class InkCanvas extends InkElement {
    styles() {
        return `
            :host { display: grid; flex: 1; min-width: 0; grid-template: 16px minmax(0, 1fr) 19px / 17px minmax(0, 1fr) 19px; background: #f0f0f0; }
            .corner { display: grid; place-items: center; }
            ink-scroll { padding: 0 2px; }
            ink-scroll[vertical] { padding: 0 0 3px; }
        `;
    }
    markup() {
        return `
            <span class="corner">${icon('lockGold', 10)}</span>
            <ink-ruler zero="467" mark="138"></ink-ruler>
            <span class="corner">${icon('magnify', 11)}</span>
            <ink-ruler vertical zero="807" mark="217"></ink-ruler>
            <ink-drawing></ink-drawing>
            <ink-scroll vertical parts="264 262 262"></ink-scroll>
            <span></span>
            <ink-scroll parts="112 994 209"></ink-scroll>
            <span class="corner">${icon('cms', 12)}</span>`;
    }
}
customElements.define('ink-canvas', InkCanvas);

class InkDockHead extends InkElement {
    styles() {
        return `
            :host { display: flex; align-items: center; height: 23px; padding-right: 7px; gap: 1px; border-bottom: 1px solid #a5a5a5; }
            span { flex: 1; white-space: nowrap; }
            button { display: block; margin-left: 10px; }
        `;
    }
    markup() {
        return `${icon(this.getAttribute('icon'), 13)}<span><slot></slot></span>
            <button aria-label="Свернуть">${icon('iconify', 11)}</button><button aria-label="Закрыть">${icon('close', 11)}</button>`;
    }
}
customElements.define('ink-dock-head', InkDockHead);

class InkTrace extends InkElement {
    styles() {
        return `
            :host { display: flex; flex-direction: column; height: 448px; padding: 5px 8px 8px 10px; border-bottom: 2px solid #fff; border-right: 1px solid #fff; }
            h3 { margin: 0; font-size: 14px; line-height: 20px; }
            .fields { padding: 3px 0 0 5px; }
            ink-spin { --field: 64px; --h: 28px; }
            ink-spin.short { --field: 38px; }
            .out { margin-top: 50px; }
            h3 + .radio { margin-top: 3px; }
            .radio { display: flex; align-items: center; gap: 6px; height: 24px; padding-left: 7px; }
            .radio input { appearance: none; width: 13px; height: 13px; border: 1px solid #333; border-radius: 50%; background: #fff; }
            .radio input:checked { background: radial-gradient(#333 4px, #fff 5px); }
            .buttons { display: flex; gap: 8px; margin-top: auto; padding-right: 2px; }
            .buttons button { width: 97px; height: 28px; border: 1px solid #adadad; background: #e1e1e1; }
            .buttons :first-child { margin-right: auto; }
            .buttons u { margin: 0; }
            .buttons u:first-child { margin: 0; }
            .buttons :disabled { background: #ccc; border-color: #bfbfbf; color: #838383; text-shadow: 1px 1px #fff; }
        `;
    }
    markup() {
        return `
            <h3>Эвристика</h3>
            <div class="fields">
                <ink-spin label="_Curves (multiplier):" value="1,000"></ink-spin>
                <ink-spin class="short" label="_Islands (weight):" value="5"></ink-spin>
                <ink-spin class="short" label="Sparse pixels (window _radius):" value="4"></ink-spin>
                <ink-spin label="Sparse pixels (_multiplier):" value="1,000"></ink-spin>
            </div>
            <h3 class="out">Вывод</h3>
            <div class="radio"><input type="radio" name="out" id="voronoi"><label for="voronoi">${mnemonic('_Диаграмма Вороного')}</label></div>
            <div class="radio"><input type="radio" name="out" id="bezier" checked><label for="bezier">${mnemonic('Преобразовать в кривые _Безье')}</label></div>
            <div class="buttons"><button>Сбросить</button><button disabled>${mnemonic('_Остановить')}</button><button>${mnemonic('_OK')}</button></div>`;
    }
}
customElements.define('ink-trace', InkTrace);

class InkDockTabs extends InkElement {
    styles() {
        return `
            :host { display: flex; flex-direction: column; gap: 4px; padding: 3px 2px 9px 3px; }
            button { display: flex; align-items: center; gap: 2px; height: 24px; padding: 0 5px 0 2px; border: 1px solid #adadad; background: #e1e1e1; fill: #666; text-align: left; }
            span { flex: 1; }
            .on { border-color: #1a5a8c; background: #cce4f7; fill: #000; }
        `;
    }
    markup() {
        return [['align', 'Выровнять и расставить (Shift+Ctrl+A)'], ['export', 'Экспортировать в PNG (Shift+Ctrl+E)'], ['fill', 'Заливка и обводка (Shift+Ctrl+F)'],
            ['effects', 'Контурные эффекты (Shift+Ctrl+7)'], ['raster', 'Векторизовать пиксельную графику']]
            .map(([n, t]) => `<button class="${n === 'raster' ? 'on' : ''}">${icon(n, 13)}<span>${t}</span><svg width="8" height="6"><path d="M0 5l4-4 4 4z"/></svg></button>`).join('');
    }
}
customElements.define('ink-dock-tabs', InkDockTabs);

class InkTextDock extends InkElement {
    styles() {
        return `
            :host { display: flex; flex-direction: column; flex: 1; min-height: 0; overflow: hidden; padding: 4px 6px 0 5px; }
            .tabs { display: flex; align-items: flex-end; flex: none; height: 29px; }
            .tabs button { height: 27px; padding: 2px 4px 0; border: 1px solid #d9d9d9; border-left: 0; border-bottom: 0; }
            .tabs button:first-child { width: 63px; height: 29px; background: #fff; border-left: 1px solid #d9d9d9; }
            .tabs button:last-child { width: 78px; }
            .page { flex: 1; min-height: 0; padding: 3px 2px 0 1px; border: 1px solid #d9d9d9; border-bottom: 0; background: #fff; }
            .frames { display: grid; grid-template-columns: 1fr 1fr; gap: 5px; }
            fieldset { margin: 0; min-width: 0; height: 148px; padding: 3px 4px 0 5px; border: 1px solid #a5a5a5; }
            legend { padding: 0 2px; margin-left: -2px; line-height: 20px; }
            .list { display: flex; height: 120px; border: 1px solid #a5a5a5; padding: 2px; }
            ul { flex: 1; min-width: 0; margin: 0; padding: 0; list-style: none; overflow: hidden; color: #000080; }
            li { display: flex; gap: 8px; height: 28px; padding-left: 4px; line-height: 28px; white-space: nowrap; }
            li:nth-child(2) { background: #f0f0f0; }
            li span { color: #888; }
            del { text-decoration-color: #c01030; }
            .old { font-family: "Liberation Serif", serif; }
            .script { font-family: "Liberation Serif", serif; font-style: italic; }
            ink-scroll { width: 19px; margin-left: 2px; }
            .style { height: 78px; margin: 4px 4px 7px; border: 1px solid #a5a5a5; }
            table { width: 100%; border-collapse: collapse; table-layout: fixed; }
            th, td { padding: 0 0 0 2px; text-align: left; font-weight: 400; line-height: 25px; }
            th:first-child { width: 75px; }
            th + th { border-left: 1px solid #ddd; }
            td { padding-left: 5px; line-height: 28px; background: #f0f0f0; }
            ink-combo.size { --label: 84px; }
            .tools { display: flex; padding: 9px 4px 0; }
            .tools button { display: grid; place-items: center; width: 26px; height: 29px; border: 1px solid transparent; }
            .tools button.on { border-color: #99ccf5; background: #cce8ff; }
            .tools i { width: 1px; margin: 0 11px 0 10px; background: #a5a5a5; }
        `;
    }
    markup() {
        const tool = (n, on) => `<button class="${on ? 'on' : ''}" aria-label="${n}">${icon(n)}</button>`;
        return `
            <div class="tabs"><button>${mnemonic('_Шрифт')}</button><button>${mnemonic('_Текст')}</button><button>${mnemonic('Вариа_нты')}</button></div>
            <div class="page">
                <div class="frames">
                    <fieldset><legend>Гарнитура</legend>
                        <div class="list">
                            <ul>
                                <li><del>DejaVu Sans</del><span>AaBbCcIiPp</span></li>
                                <li>Old English Text MT<span class="old">𝔄a</span></li>
                                <li>sans-serif<span>AaBbCcIiPpQq</span></li>
                                <li>SWScrpc<span class="script">AaBbCcIiPpQq</span></li>
                            </ul>
                            <ink-scroll vertical parts="0 8 68"></ink-scroll>
                        </div>
                    </fieldset>
                    <fieldset><legend>Стиль</legend>
                        <div class="style"><table><tr><th>CSS</th><th>Начертание</th></tr><tr><td>Normal</td><td>Regular</td></tr></table></div>
                        <ink-combo class="size" label="Кегль шрифта" value="28,346"></ink-combo>
                    </fieldset>
                </div>
                <div class="tools">${tool('left', true)}${tool('center')}${tool('right')}${tool('justify')}<i></i>${tool('horiz', true)}${tool('vert')}<i></i><ink-combo value="0%" off></ink-combo></div>
            </div>`;
    }
}
customElements.define('ink-text-dock', InkTextDock);

class InkDock extends InkElement {
    styles() {
        return `
            :host { display: flex; width: 431px; flex: none; padding: 1px 2px 0 7px; background: #f0f0f0; }
            .panels { display: flex; flex-direction: column; flex: 1; min-width: 0; border-left: 1px solid #000; border-top: 1px solid #000; }
            ink-scroll { width: 19px; margin-left: 3px; }
        `;
    }
    markup() {
        return `
            <div class="panels">
                <ink-dock-head icon="raster">Векторизовать пиксельную графику</ink-dock-head>
                <ink-trace></ink-trace>
                <ink-dock-tabs></ink-dock-tabs>
                <ink-dock-head icon="bigT">Текст и шрифт (Shift+Ctrl+T)</ink-dock-head>
                <ink-text-dock></ink-text-dock>
            </div>
            <ink-scroll vertical parts="0 715 108"></ink-scroll>`;
    }
}
customElements.define('ink-dock', InkDock);

const PALETTE = `000 1a1a1a 333 4d4d4d 666 808080 999 b3b3b3 ccc e6e6e6 ececec f2f2f2 f9f9f9 fff
    800000 f00 808000 ff0 008000 0f0 008080 0ff 000080 00f 800080 f0f
    2b0000 550000 800000 a00 d40000 f00 ff2a2a f55 ff8080 faa ffd5d5
    280b0b 501616 782121 a02c2c c83737 d35f5f de8787 e9afaf f4d7d7 241c1c 483737 6c5353 916f6f ac9393 c8b7b7 e3dbdb
    2b1100 520 803300 a40 d45500 f60 ff7f2a f95 ffb380 fca ffe6d5
    28170b 502d16 784421 a05a2c c87137 d38d5f deaa87 e9c6af f4e3d7 241f1c 483e37 6c5d53 917c6f ac9d93 c8beb7 e3dedb
    2b2200 540 806600 a80 d4aa00 fc0 ffd42a fd5 ffe680 fea fff6d5
    28220b 504416 786721 a0892c c8ab37 d3bc5f decd87 e9ddaf f4eed7 24221c 484537 6c6753 918a6f aca793 c8c4b7 e3e2db
    222b00 450 668000 8a0 aad400 cf0 d4ff2a df5 e5ff80 efa f6ffd5
    22280b 445016 677821 89a02c abc837 bcd35f cdde87 dde9af eef4d7 23241c 454837 676c53 8a916f a7ac93 c4c8b7 e2e3db
    112b00 225500`.split(/\s+/);

class InkPalette extends InkElement {
    styles() {
        return `
            :host { display: block; padding: 1px 0; background: #f0f0f0; }
            .row { display: flex; height: 19px; padding-left: 2px; border-top: 2px solid #000; background: #fff; }
            .colors { display: flex; flex: 1; min-width: 0; height: 14px; overflow: hidden; }
            .colors button { flex: none; width: 14px; }
            .more { width: 11px; }
            svg { display: block; }
            ink-scroll { height: 15px; padding-right: 10px; }
        `;
    }
    markup() {
        return `
            <div class="row">
                <div class="colors">
                    <button aria-label="none"><svg width="14" height="14"><path d="M1 1l12 12M13 1L1 13" stroke="#700" stroke-width="1.4"/></svg></button>
                    ${PALETTE.map(c => `<button style="background:#${c}" aria-label="#${c}"></button>`).join('')}
                </div>
                <button class="more" aria-label="Палитра"><svg width="11" height="8"><path d="M8 0v8L3 4z"/></svg></button>
            </div>
            <ink-scroll parts="0 590 1280"></ink-scroll>`;
    }
}
customElements.define('ink-palette', InkPalette);

class InkStatus extends InkElement {
    styles() {
        return `
            :host { display: flex; align-items: center; height: 34px; background: #f0f0f0; overflow: hidden; }
            .style { display: grid; grid-template-columns: 78px 46px; padding-left: 2px; font-size: 12px; line-height: 17px; }
            ink-spin { --field: 36px; --h: 25px; font-size: 12px; }
            ink-spin:first-of-type { color: #555; }
            i { width: 1px; height: 34px; margin-left: 3px; background: #a5a5a5; }
            .flag { width: 19px; display: grid; place-items: center; }
            ink-combo { --field: 94px; --h: 33px; --arrow: 22px; font-size: 13px; font-weight: 700; }
            p { flex: 1; margin: 0 0 0 2px; white-space: nowrap; font-size: 14px; }
            .pos { display: grid; grid-template-columns: 11px 58px; margin: 0 9px 0 5px; font-size: 12px; line-height: 17px; }
            .pos b { font: 13px/17px "Liberation Mono", monospace; text-align: right; white-space: pre; }
            .zoom { --field: 45px; }
        `;
    }
    markup() {
        return `
            <div class="style"><span>Заливка:</span><span>Н/Д</span><span>Обводка:</span><span>Н/Д</span></div>
            <ink-spin label="Н:" value="0" off></ink-spin><i></i>
            <button class="flag" aria-label="Видимость">${icon('eye', 11)}</button>
            <button class="flag" aria-label="Блокировка">${icon('lock', 13)}</button>
            <ink-combo value="•Layer 1"></ink-combo>
            <p>Нет выделенных объектов. Используйте щелчок, Shift+щелчок, Alt+прокрутка колесом мыши, либо обведите объекты рамкой.</p>
            <i></i>
            <div class="pos"><span>X:</span><b>-124,35</b><span>Y:</span><b>223,01</b></div>
            <ink-spin class="zoom" label="Z:" value="70%"></ink-spin>`;
    }
}
customElements.define('ink-status', InkStatus);

class InkTaskbar extends InkElement {
    styles() {
        return `
            :host { display: flex; align-items: center; height: 50px; background: #1d1d1d; color: #fff; }
            button { display: grid; place-items: center; height: 50px; }
            .sys { width: 60px; }
            .apps { display: flex; gap: 11px; padding-left: 8px; flex: 1; }
            .app { width: 51px; box-shadow: inset 0 -3px #f4979c; }
            .many { background: linear-gradient(#b97379, #b97379) right bottom / 11px 3px no-repeat, linear-gradient(#f4979c, #f4979c) bottom / 100% 3px no-repeat; box-shadow: none; }
            .active { width: 61px; margin: 0 -5px; background: #4b4b4b; }
            .tray { display: flex; align-items: center; gap: 12px; }
            .tray button { width: auto; }
            .clock { width: 80px; text-align: center; line-height: 22px; margin-right: 6px; }
            .note { padding-right: 24px; margin-right: 4px; border-right: 1px solid #666; }
        `;
    }
    markup() {
        const app = (n, cls, size = 28) => `<button class="app ${cls}" aria-label="${n}">${icon(n, size)}</button>`;
        return `
            <button class="sys" aria-label="Пуск">${icon('win', 22)}</button>
            <button class="sys" aria-label="Поиск">${icon('search', 23)}</button>
            <div class="apps">${app('folder', 'many', 30)}${app('chrome', '')}${app('rar', 'many')}${app('gray', '')}${app('logo', 'active', 30)}${app('paint', '', 30)}</div>
            <div class="tray">
                <button aria-label="Значки">${icon('tray')}</button>
                <button aria-label="Громкость">${icon('sound', 20)}</button>
                <button aria-label="Корзина">${icon('bin', 20)}</button>
                <span>POR</span>
                <div class="clock">8:01<br>24.02.2020</div>
                <button class="note" aria-label="Уведомления">${icon('note', 22)}</button>
            </div>`;
    }
}
customElements.define('ink-taskbar', InkTaskbar);

class InkWindow extends InkElement {
    styles() {
        return `
            :host { display: flex; flex-direction: column; height: 100vh; }
            main { display: flex; flex: 1; min-height: 0; }
            main > * { overflow: hidden; }
        `;
    }
    markup() {
        return `
            <ink-titlebar></ink-titlebar>
            <ink-menubar></ink-menubar>
            <ink-options></ink-options>
            <main>
                <ink-toolbox></ink-toolbox>
                <ink-canvas></ink-canvas>
                <ink-dock></ink-dock>
                <ink-strip items="new open save print - import export - undo redo - copy cut paste - zoomSel zoomDraw zoomPage - dup clone unlink - group ungroup - fill bigT layers xml align - docProps prefs"></ink-strip>
                <ink-strip items="snap* - snap snapBox snapCorner snapMid snapCenter - snap* snapPath snapX snapCusp* snapSmooth snapLine - snap* snapObj snapRot snapText - snapPage snapGrid* snapGuide*"></ink-strip>
            </main>
            <ink-palette></ink-palette>
            <ink-status></ink-status>
            <ink-taskbar></ink-taskbar>`;
    }
}
customElements.define('ink-window', InkWindow);
</script>
</body>
</html>
